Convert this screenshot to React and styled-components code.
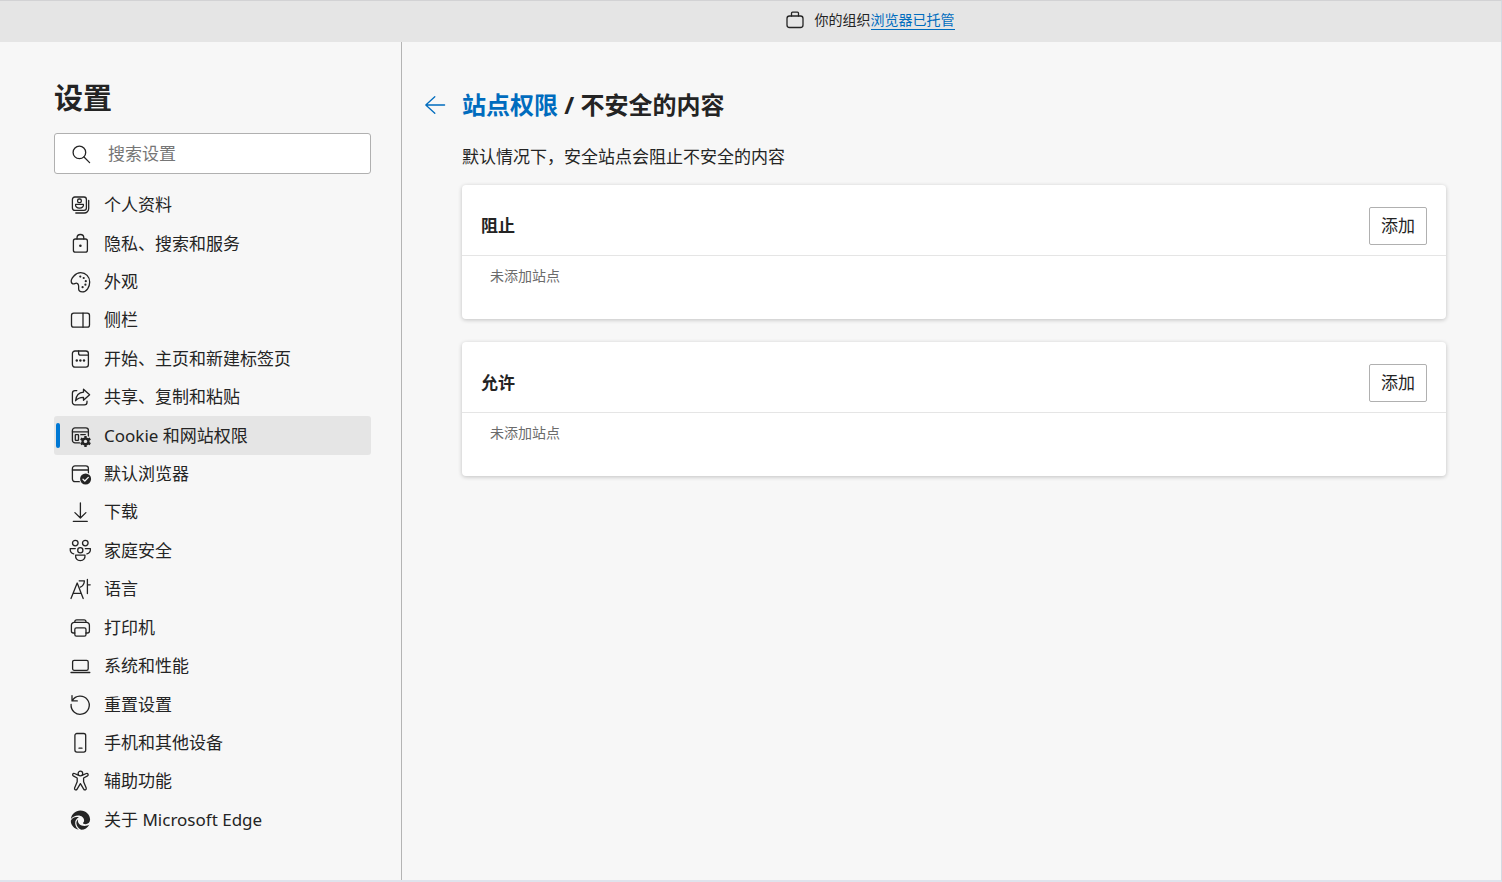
import React, {useState} from "react";
import styled, {createGlobalStyle} from "styled-components";

const GlobalStyle = createGlobalStyle`
    *{
        box-sizing: border-box;
    }

    body{
        margin: 0;
        background-color: #f7f7f7;
        color: #242424;
        font-family: "Noto Sans", "Noto Sans CJK SC", sans-serif;
        font-size: 17px;
        line-height: 24px;
    }

    button, input{
        font: inherit;
        color: inherit;
    }

    h1, h2, p, ul{
        margin: 0;
        padding: 0;
    }
`;

const Wrapper = styled.div`
    display: flex;
    flex-direction: column;
    min-height: 100vh;
    border-top: 1px solid #d2d2d4;
    border-right: 1px solid #d5dae2;
    border-bottom: 2px solid #dfe3ec;
`;

const Banner = styled.header`
    display: flex;
    align-items: center;
    justify-content: center;
    gap: 8px;
    height: 41px;
    padding-left: 236px;
    padding-bottom: 4px;
    background-color: #e5e5e5;
    font-size: 14px;
    line-height: 20px;

    a{
        color: #006cbe;
        text-decoration: none;
        border-bottom: 1px solid #006cbe;
    }
`;

const Body = styled.div`
    display: flex;
    flex: 1;
`;

const Sidebar = styled.aside`
    flex: 0 0 402px;
    min-width: 0;
    padding: 36px 30px 40px 54px;
    border-right: 1px solid #b4b4b4;
`;

const Title = styled.h1`
    font-size: 29px;
    line-height: 40px;
    font-weight: 700;
`;

const SearchBox = styled.label`
    display: flex;
    align-items: center;
    gap: 15px;
    height: 41px;
    margin: 15px 0 12px;
    padding: 0 14px;
    background-color: #fff;
    border: 1px solid #b0b0b0;
    border-radius: 3px;

    input{
        flex: 1;
        width: 0;
        min-width: 0;
        padding: 0;
        border: none;
        outline: none;
        background: transparent;
    }

    input::placeholder{
        color: #767676;
        opacity: 1;
    }
`;

const NavList = styled.ul`
    display: grid;
    grid-auto-rows: 1fr;
    min-height: 653px;
    list-style: none;
`;

const NavLink = styled.a`
    position: relative;
    display: flex;
    align-items: center;
    gap: 12px;
    height: 100%;
    padding-left: 14px;
    border-radius: 3px;
    color: inherit;
    text-decoration: none;
    background-color: ${p => p.$active ? "#e5e5e5" : "transparent"};

    ${
        p => p.$active && `
            &::before{
                content: "";
                position: absolute;
                left: 2px;
                top: 7px;
                bottom: 7px;
                width: 4px;
                border-radius: 2px;
                background-color: #0078d4;
            }
        `
    }
`;

const Svg = styled.svg`
    flex: none;
    width: 24px;
    height: 24px;
    fill: none;
    stroke: ${p => p.$color || "#242424"};
    stroke-width: 1.3;
    stroke-linecap: round;
    stroke-linejoin: round;

    .solid{
        fill: #242424;
        stroke: none;
    }

    .bg{
        fill: ${p => p.$bg || "#f7f7f7"};
        stroke: none;
    }

    .cut{
        stroke: ${p => p.$bg || "#f7f7f7"};
    }
`;

const Main = styled.main`
    flex: 1;
    min-width: 0;
    padding: 45px 55px 40px 21px;
`;

const Heading = styled.div`
    display: flex;
    align-items: center;
    gap: 15px;

    h2{
        font-size: 24px;
        line-height: 36px;
        font-weight: 700;
    }

    a{
        color: #006cbe;
        text-decoration: none;
    }
`;

const BackButton = styled.button`
    display: flex;
    padding: 0;
    border: none;
    background: none;
    cursor: pointer;
`;

const Content = styled.div`
    display: flex;
    flex-direction: column;
    padding-left: 39px;
`;

const Description = styled.p`
    margin: 22px 0 16px;
`;

const Card = styled.section`
    margin-bottom: 23px;
    background-color: #fff;
    border-radius: 4px;
    box-shadow: 0 1px 4px rgba(0,0,0,0.22);
`;

const CardHeader = styled.div`
    display: flex;
    align-items: center;
    justify-content: space-between;
    padding: 22px 19px 10px;
    border-bottom: 1px solid #e5e5e5;

    h2{
        font-size: 17px;
        line-height: 24px;
        font-weight: 700;
    }
`;

const AddButton = styled.button`
    height: 38px;
    padding: 0 11px;
    background-color: #fff;
    border: 1px solid #b0b0b0;
    border-radius: 2px;
    cursor: pointer;
`;

const EmptyText = styled.p`
    padding: 10px 28px 33px;
    font-size: 14px;
    line-height: 20px;
    color: #6b6b6b;
`;

const icons = {
    briefcase: <>
        <rect x="4" y="8" width="16" height="11.5" rx="2.5" />
        <path d="M8.5 8V5.2a1 1 0 0 1 1-1h5a1 1 0 0 1 1 1V8" />
    </>,
    search: <>
        <circle cx="10.4" cy="10.4" r="6.3" />
        <path d="M15 15l5.6 5.6" />
    </>,
    back: <path d="M21.6 12H2.8M11.8 3.8L2.8 12l9 8.2" />,
    profile: <>
        <rect x="4.4" y="4" width="14" height="13.4" rx="2.4" />
        <rect x="9.6" y="6" width="3.7" height="3.6" rx="1.4" />
        <path d="M7.6 11.4h7.8c.5 2.2-1.3 3.7-3.9 3.7s-4.4-1.5-3.9-3.7z" />
        <path d="M20.7 7.5v8a4.5 4.5 0 0 1-4.5 4.5H7.8" />
    </>,
    lock: <>
        <rect x="5.4" y="7" width="14" height="13.2" rx="2" />
        <path d="M9 7V5.9a3.4 3.4 0 0 1 6.8 0V7" />
        <circle className="solid" cx="12.4" cy="13.7" r="1.3" />
    </>,
    palette: <>
        <path d="M3.3 12C2.5 9 7.3 2.7 12.7 2.7c5.1 0 9 4.1 9 9.3 0 5-3 9.9-7.4 9.9-2.4 0-3.8-1.4-3.7-3.4.1-1.8.6-4.6-1.6-5.2-1.8-.5-2.7 1.1-4.2.5-.8-.3-1.3-.9-1.5-1.8z" />
        <circle className="solid" cx="12.3" cy="6.6" r="1.1" />
        <circle className="solid" cx="15.7" cy="8" r="1.1" />
        <circle className="solid" cx="17.8" cy="11.2" r="1.1" />
        <circle className="solid" cx="17.4" cy="14.7" r="1.1" />
        <circle className="solid" cx="14.6" cy="17.2" r="1.1" />
    </>,
    sidebar: <>
        <rect x="3.5" y="5.2" width="18" height="14" rx="2.2" />
        <path d="M15 5.2v14" />
    </>,
    home: <>
        <rect x="4.4" y="4" width="16" height="16.2" rx="2.6" />
        <path d="M10.6 4v2.2a2 2 0 0 0 2 2h7.8" />
        <circle className="solid" cx="8.8" cy="13.5" r="1.2" />
        <circle className="solid" cx="12.4" cy="13.5" r="1.2" />
        <circle className="solid" cx="16" cy="13.5" r="1.2" />
    </>,
    share: <>
        <path d="M8.8 5.6H7a2.6 2.6 0 0 0-2.6 2.6v9A2.6 2.6 0 0 0 7 19.800h9.400a2.600 2.600 0 0 0 2.600-2.600v-1" />
        <path d="M15.500 4.200l6.100 5.500-6.100 5.500v-2.900c-3.400-.1-5.800.9-7.900 3.400.5-5 3.200-8.100 7.900-8.500z" />
    </>,
    cookie: <>
        <rect x="4.4" y="3.9" width="16" height="15" rx="2.6" />
        <path d="M4.400 7.800h16M12.800 10.700h4.500" />
        <rect x="7.3" y="10.7" width="3.2" height="5.6" rx=".6" />
        <circle className="bg" cx="17.5" cy="17.4" r="5.8" />
        <circle className="solid" cx="17.5" cy="17.4" r="4" />
        <path d="M17.5 11.900v11M12.740 14.650l9.520 5.500M12.740 20.150l9.520-5.500" strokeWidth="2.400" strokeLinecap="butt" />
        <circle className="bg" cx="17.5" cy="17.4" r="1.7" />
    </>,
    browser: <>
        <rect x="4.4" y="3.9" width="16" height="15.8" rx="2.6" />
        <path d="M4.4 8h16" />
        <circle className="bg" cx="17.6" cy="17" r="6.5" />
        <circle className="solid" cx="17.6" cy="17" r="5.5" />
        <path className="cut" d="M15 17.200l1.800 1.800 3.500-3.600" />
    </>,
    download: <path d="M12.4 3v15M6.900 12.600l5.500 5.400 5.500-5.400M5.300 21.300h14" />,
    family: <>
        <circle cx="7.3" cy="4.100" r="2.8" />
        <circle cx="17.3" cy="4.100" r="2.8" />
        <circle cx="12.3" cy="11.200" r="2.6" />
        <path d="M7.600 16.200h9.400c.3 3.400-1.500 5.400-4.700 5.400s-5-2-4.700-5.400z" />
        <path d="M7.300 9.600H2.200c-.2 3.100 1.100 4.800 3.500 5.200M17.300 9.600h5.100c.2 3.100-1.100 4.800-3.500 5.200" />
    </>,
    language: <>
        <path d="M3 21.500L9.200 6l6 15.500M5.200 16.300h7.900" />
        <path d="M11.200 3.800h5.200c-.1 3.400-1.200 5.200-4 6.400M19.400 2.500v14M19.400 7.800h2.800" />
    </>,
    printer: <>
        <path d="M6.800 17H5.400a2 2 0 0 1-2-2V9.200a2.800 2.800 0 0 1 2.800-2.800h12.400a2.800 2.800 0 0 1 2.800 2.800V15a2 2 0 0 1-2 2h-1.500" />
        <path d="M6.800 6.400V5.800a2 2 0 0 1 2-2H16a2 2 0 0 1 2 2v.6" />
        <rect x="6.8" y="11.8" width="11.2" height="8.4" rx="1.6" />
    </>,
    laptop: <>
        <rect x="4.6" y="6.3" width="15.6" height="10" rx="1.6" />
        <path d="M3 18.500h18.800" />
    </>,
    reset: <path d="M4 2.600v5.300h5.300M4.300 7.600a9.100 9.100 0 1 1-1.200 3.700" />,
    phone: <>
        <rect x="6.900" y="2.500" width="10.800" height="18.600" rx="2" />
        <path d="M11 17.200h3" />
    </>,
    accessibility: <>
        <circle cx="12.4" cy="4.5" r="2.3" />
        <path d="M10.200 6.200L6.500 4.500c-1.500-.6-2.700 1.500-1.200 2.400L9.200 9v3.700L6.600 19c-.6 1.700 1.600 2.700 2.500 1.100l3.300-5.500 3.300 5.500c.9 1.600 3.100.6 2.500-1.100l-2.600-6.300V9l3.900-2.100c1.500-.9.3-3-1.200-2.400l-3.700 1.700" />
    </>,
    edge: <>
        <path className="solid" d="M2.900 11C3.500 6.200 7.500 2.600 12.400 2.600c5.400 0 9.700 4.200 9.700 9 0 3-2.200 4.600-4.600 4.600-1.600 0-2.700-.5-2.500-1.200.2-.5 1.100-1 1.100-2.500 0-2.700-2.500-5-6-5-2.900 0-5.500 1.300-7.200 3.500z" />
        <path className="solid" d="M2.800 12.700c.9-2.300 3.200-3.800 6-3.800 1 0 1.700.2 2.100.4-2.300 1-3.900 3.300-3.700 6.100.2 2.400 1.500 4.700 3.500 6.200-4.500-.7-7.900-4.400-7.900-8.900z" />
        <path className="solid" d="M9.900 11.500c-.4 3.900 2.400 6.400 6.700 6.400 1.900 0 3.600-.5 4.700-1.200-1.600 3.100-4.700 5.100-8 5.100-2.800-1.200-4.700-3.600-4.900-6.400-.1-1.500.5-2.900 1.500-3.900z" />
    </>
};

const Icon = ({name, color, bg}) => (
    <Svg viewBox="0 0 24 24" aria-hidden="true" $color={color} $bg={bg}>{icons[name]}</Svg>
);

const navItems = [
    {icon: "profile", text: "个人资料"},
    {icon: "lock", text: "隐私、搜索和服务"},
    {icon: "palette", text: "外观"},
    {icon: "sidebar", text: "侧栏"},
    {icon: "home", text: "开始、主页和新建标签页"},
    {icon: "share", text: "共享、复制和粘贴"},
    {icon: "cookie", text: "Cookie 和网站权限"},
    {icon: "browser", text: "默认浏览器"},
    {icon: "download", text: "下载"},
    {icon: "family", text: "家庭安全"},
    {icon: "language", text: "语言"},
    {icon: "printer", text: "打印机"},
    {icon: "laptop", text: "系统和性能"},
    {icon: "reset", text: "重置设置"},
    {icon: "phone", text: "手机和其他设备"},
    {icon: "accessibility", text: "辅助功能"},
    {icon: "edge", text: "关于 Microsoft Edge"}
];

const SiteCard = ({title}) => (
    <Card>
        <CardHeader>
            <h2>{title}</h2>
            <AddButton type="button">添加</AddButton>
        </CardHeader>
        <EmptyText>未添加站点</EmptyText>
    </Card>
);

export default function App(){
    const [active, setActive] = useState("cookie");
    const [keyword, setKeyword] = useState("");

    return <>
        <GlobalStyle />
        <Wrapper>
            <Banner>
                <Icon name="briefcase" />
                <span>你的组织<a href="#managed">浏览器已托管</a></span>
            </Banner>
            <Body>
                <Sidebar>
                    <Title>设置</Title>
                    <SearchBox>
                        <Icon name="search" bg="#fff" />
                        <input
                            type="text"
                            aria-label="搜索设置"
                            placeholder="搜索设置"
                            value={keyword}
                            onChange={e=>setKeyword(e.target.value)}
                        />
                    </SearchBox>
                    <nav>
                        <NavList>
                            {navItems.map(v => (
                                <li key={v.icon}>
                                    <NavLink href={"#" + v.icon} $active={active === v.icon} onClick={()=>setActive(v.icon)}>
                                        <Icon name={v.icon} bg={active === v.icon ? "#e5e5e5" : "#f7f7f7"} />
                                        {v.text}
                                    </NavLink>
                                </li>
                            ))}
                        </NavList>
                    </nav>
                </Sidebar>
                <Main>
                    <Heading>
                        <BackButton type="button" aria-label="返回">
                            <Icon name="back" color="#006cbe" />
                        </BackButton>
                        <h2><a href="#permissions">站点权限</a> / 不安全的内容</h2>
                    </Heading>
                    <Content>
                        <Description>默认情况下，安全站点会阻止不安全的内容</Description>
                        <SiteCard title="阻止" />
                        <SiteCard title="允许" />
                    </Content>
                </Main>
            </Body>
        </Wrapper>
    </>;
}
